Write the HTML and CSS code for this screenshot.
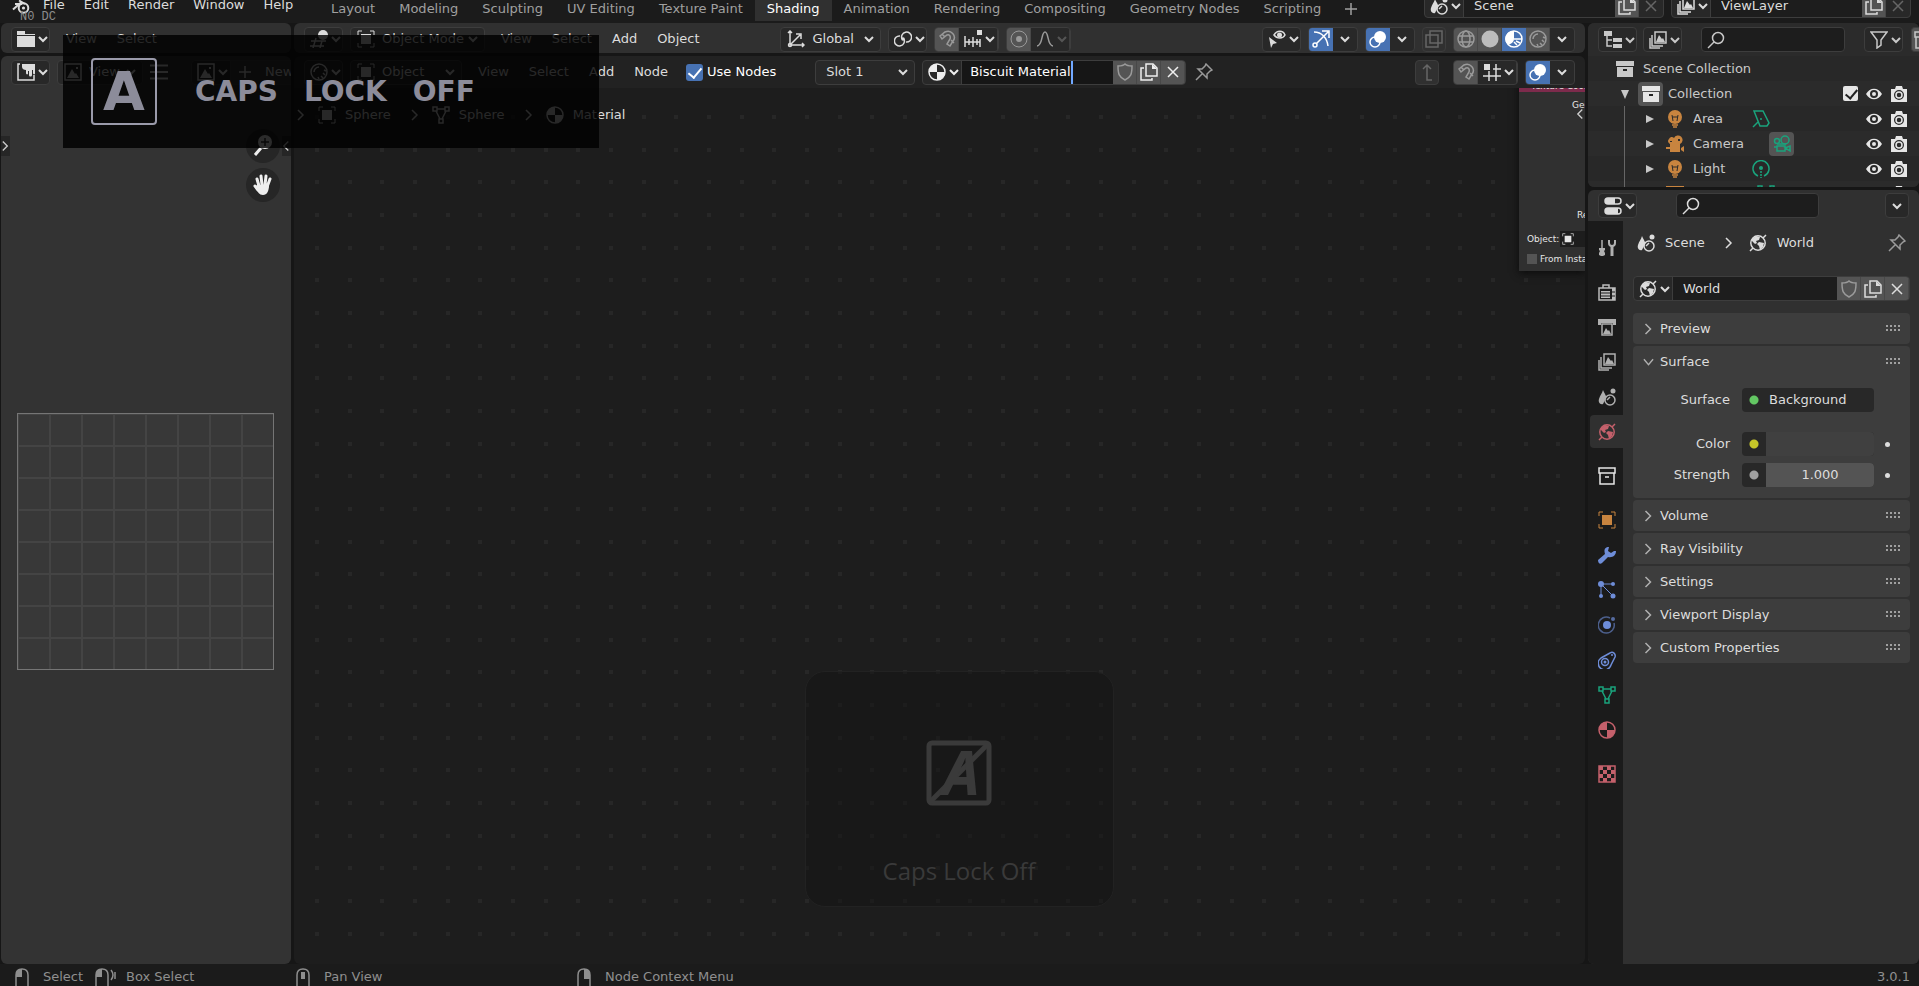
FILE: index.html
```html
<!DOCTYPE html>
<html lang="en">
<head>
<meta charset="utf-8">
<title>Blender</title>
<link rel="stylesheet" href="styles.css">
</head>
<body>
<svg class="sprite" aria-hidden="true">
  <symbol id="chev" viewBox="0 0 10 10"><path d="M1 3l4 4 4-4"/></symbol>
  <symbol id="right" viewBox="0 0 10 14"><path d="M2 2l5 5-5 5"/></symbol>
  <symbol id="left" viewBox="0 0 10 14"><path d="M7 2L2 7l5 5"/></symbol>
  <symbol id="down" viewBox="0 0 12 14"><path d="M1 4l5 6 5-6"/></symbol>
  <symbol id="blender" viewBox="0 0 18 18"><circle cx="11.500" cy="10" r="4.800" stroke-width="2"/><circle cx="11.500" cy="10" r="1.600" class="f"/><path d="M1 11.500L9 4.500M3 6h7M7 2.500l6 3.500" stroke-width="2"/></symbol>
  <symbol id="folder" viewBox="0 0 18 18"><path class="f" d="M0 1h8v3h10v1H0zM0 6h18v11H0z"/></symbol>
  <symbol id="paint" viewBox="0 0 18 18"><path d="M3 1H1v16h16v-5"/><path class="f" d="M5 1h13v10c-1 1-2 0-2-1V7h-1v5c0 2-3 2-3 0V8h-1v3c-1 1-2 0-2-1V7c-2 0-4-1-4-3z"/></symbol>
  <symbol id="image" viewBox="0 0 18 18"><path d="M1 1h16v16H1z"/><path class="f" d="M3 15L8 6l3 5 1-1 3 5zM12 4h2v2h-2z"/></symbol>
  <symbol id="lines" viewBox="0 0 18 18"><path d="M0 2.500h18M0 9h18M0 15.500h18" stroke-width="2"/></symbol>
  <symbol id="plus" viewBox="0 0 12 12"><path d="M6 0v12M0 6h12"/></symbol>
  <symbol id="view3d" viewBox="0 0 18 18"><circle class="f" cx="13" cy="5" r="5"/><path d="M1 11h15M0 16h14M6 8l-3 10M12 11l-2 7"/></symbol>
  <symbol id="object" viewBox="0 0 18 18"><path d="M1 5V1h4M13 1h4v4M17 13v4h-4M5 17H1v-4" stroke-width="1"/><path class="f" d="M4 4h10v10H4z"/></symbol>
  <symbol id="ball" viewBox="0 0 18 18"><circle cx="9" cy="9" r="8"/><path d="M4 9a5 5 0 0 1 5-5"/><path d="M14 7l2 1M13 10l2 2M11 13l2 2M8 14l1 2" stroke-width="1.500"/></symbol>
  <symbol id="mesh" viewBox="0 0 18 18"><path d="M1 1h4v4H1zM13 1h4v4h-4zM7 13h4v4H7zM5 3h8M4 5l4 8M14 5l-4 8"/></symbol>
  <symbol id="mat" viewBox="0 0 18 18"><circle cx="9" cy="9" r="8"/><path class="f" d="M9 9V1a8 8 0 0 0-8 8zM9 9v8a8 8 0 0 0 8-8z"/></symbol>
  <symbol id="matball" viewBox="0 0 18 18"><circle cx="9" cy="9" r="8"/><path class="f" d="M9 9V1a8 8 0 0 0-6 14c3-1 6-3 6-6z"/><path d="M9 9h8M11 11l4 2M9 12l3 3"/></symbol>
  <symbol id="world" viewBox="0 0 18 18"><circle cx="9" cy="9" r="7.200"/><path class="f" d="M3 5l4-3 4 1-1 3-3 1 1 2-2 1-3-3zM10 8l5 1-1 4-3 3-1-4-2-2z"/><path d="M1 17l3-3M14 4l3-3"/></symbol>
  <symbol id="axes" viewBox="0 0 18 18"><path d="M3 1v14h14M1 3l2-2 2 2M15 13l2 2-2 2M3 15L13 5M9 4h5v5"/><circle cx="3" cy="15" r="1.500"/></symbol>
  <symbol id="link" viewBox="0 0 18 18"><path d="M8 9a5 5 0 1 1 4 3M10 9a5 5 0 1 1-4-3"/><circle class="f" cx="9" cy="9" r="1.800"/></symbol>
  <symbol id="magnet" viewBox="0 0 18 18"><path d="M2 6l5-4c6-3 12 4 8 9l-3 5-3-2 3-5c1-3-1-5-3-4L4 9zM4 4l3 3M13 10l3 3"/></symbol>
  <symbol id="snap" viewBox="0 0 18 18"><path d="M1 6v11M1 12h15M5 9v6M9 7v10M13 9v6M16 9v8"/><path class="f" d="M13 0h5v5h-5z"/></symbol>
  <symbol id="grid" viewBox="0 0 18 18"><path d="M6 8v10M13 1v17M0 13h18M10 6h8"/><path class="f" d="M1 1h6v6H1z"/></symbol>
  <symbol id="prop" viewBox="0 0 18 18"><circle cx="9" cy="9" r="8" stroke-width="1"/><circle class="f" cx="9" cy="9" r="3"/></symbol>
  <symbol id="curve" viewBox="0 0 18 18"><path d="M1 16c6 0 4-14 8-14s2 14 8 14"/></symbol>
  <symbol id="vis" viewBox="0 0 18 18"><path d="M6 5c3-5 9-5 11 0-2 4-8 4-11 0z"/><circle class="f" cx="11.500" cy="5" r="2.500"/><path class="f" d="M1 7l8 6-4 1-2 4z"/></symbol>
  <symbol id="gizmo" viewBox="0 0 18 18"><path d="M2 2c8 0 13 6 14 14M4 14L16 2M10 1h7v7"/><circle cx="3" cy="15" r="2"/></symbol>
  <symbol id="overlay" viewBox="0 0 18 18"><circle class="f" cx="11" cy="7" r="6"/><circle cx="6" cy="12" r="5"/></symbol>
  <symbol id="xray" viewBox="0 0 18 18"><path d="M5 1h12v12H5zM1 5h12v12H1z"/></symbol>
  <symbol id="wire" viewBox="0 0 18 18"><circle cx="9" cy="9" r="8"/><ellipse cx="9" cy="9" rx="4" ry="8"/><path d="M2 6h14M2 12h14"/></symbol>
  <symbol id="solid" viewBox="0 0 18 18"><circle class="f" cx="9" cy="9" r="8.500"/></symbol>
  <symbol id="up" viewBox="0 0 18 18"><path d="M14 17H9V2M5 6l4-4 4 4"/></symbol>
  <symbol id="shield" viewBox="0 0 18 18"><path d="M9 1c2 2 5 2 7 2 0 8-1 11-7 14C3 14 2 11 2 3c2 0 5 0 7-2z"/></symbol>
  <symbol id="copy" viewBox="0 0 18 18"><path d="M6 1h7l4 4v8H6zM4 5H1v12h11v-2"/><path class="f" d="M12 1l5 5h-5z"/></symbol>
  <symbol id="x" viewBox="0 0 18 18"><path d="M4 4l10 10M14 4L4 14"/></symbol>
  <symbol id="pin" viewBox="0 0 18 18"><path d="M11 1l6 6-2 1-3 3v4L3 6h4l3-3zM7 11l-6 6"/></symbol>
  <symbol id="tree" viewBox="0 0 18 18"><path class="f" d="M0 0h8v5H0zM9 7h9v4H9zM9 13h9v4H9z"/><path d="M3 5v10h5M3 9h5"/></symbol>
  <symbol id="layers" viewBox="0 0 18 18"><path d="M6 1h11v11H6zM3 4v11h11M1 7v10h10"/><path class="f" d="M7 11l3-7 3 4 1-1 2 4z"/></symbol>
  <symbol id="search" viewBox="0 0 18 18"><circle cx="11" cy="7" r="5.500"/><path d="M7 11l-6 6"/></symbol>
  <symbol id="filter" viewBox="0 0 18 18"><path d="M1 1h16l-6 8v5l-4 3V9z"/></symbol>
  <symbol id="box" viewBox="0 0 18 18"><path class="f" d="M0 1h18v5H0zM1 7h16v10H1z"/><path d="M7 10h4" stroke="#222" stroke-width="2"/></symbol>
  <symbol id="boxo" viewBox="0 0 18 18"><path d="M1 1h16v5H1zM2 6v11h14V6M7 10h4"/></symbol>
  <symbol id="bulb" viewBox="0 0 18 18"><circle class="f" cx="9" cy="7" r="7"/><path class="f" d="M5 9h8v4H5z"/><path d="M6 15h6M7 17h4"/><path d="M6 5l1 6M12 5l-1 6M6 7h6" stroke="#2b2b2b" stroke-width="1"/></symbol>
  <symbol id="movie" viewBox="0 0 18 18"><path class="f" fill-rule="evenodd" d="M3 4a3 3 0 0 1 5-1 4.500 4.500 0 1 1 6 6v2H4V9a3 3 0 0 1-1-5zm1 2v1h2V6zm8-2v2h2V4zM0 12h4v-1h10v6H4v-3H0zM15 13l3-2v6l-3-2z"/></symbol>
  <symbol id="cam2" viewBox="0 0 18 18"><circle cx="4" cy="6" r="2.500"/><circle cx="12" cy="5" r="4"/><path d="M4 9h9M4 11h8v5H4zM12 13l5-2v5zM1 12h3"/></symbol>
  <symbol id="area" viewBox="0 0 18 18"><path d="M2 1h9l6 12-2 3H8zM1 17l5-5"/><circle class="f" cx="9" cy="9" r="1"/></symbol>
  <symbol id="point" viewBox="0 0 18 18"><path d="M6 16a8 8 0 1 1 6 0"/><circle class="f" cx="9" cy="8" r="2"/><path d="M9 11v7" stroke-dasharray="2 1"/></symbol>
  <symbol id="eye" viewBox="0 0 18 18"><path class="f" fill-rule="evenodd" d="M1 9c4-7 12-7 16 0-4 7-12 7-16 0zm4 0a4 4 0 1 0 8 0 4 4 0 1 0-8 0z"/><circle class="f" cx="9" cy="9" r="2"/></symbol>
  <symbol id="cam" viewBox="0 0 18 18"><path class="f" fill-rule="evenodd" d="M1 4h4l1-3h6l1 3h4v13H1zm3 6a5 5 0 1 0 10 0 5 5 0 1 0-10 0z"/><circle cx="9" cy="10" r="3"/></symbol>
  <symbol id="props" viewBox="0 0 18 18"><rect x="1" y="1" width="16" height="6" rx="3"/><rect x="1" y="11" width="16" height="6" rx="3"/><path class="f" d="M4 1h7v6H4a3 3 0 0 1 0-6zM4 11h10v6H4a3 3 0 0 1 0-6z"/></symbol>
  <symbol id="tool" viewBox="0 0 18 18"><path d="M4 1v8"/><path d="M14 7v10" stroke-width="3"/><path class="f" d="M1 9h6v2L6 12l1 2v2l-2 1H3l-2-1v-2l1-2-1-1z"/><path d="M11 1v3c0 4 6 4 6 0V1" stroke-width="2"/></symbol>
  <symbol id="render" viewBox="0 0 18 18"><path d="M5 5V2h6v3M1 5h16v12H1z"/><path class="f" d="M14 5h3v12h-3zM3 8h9v7H3z"/><path d="M14 9h3M14 13h3M3 10h9M3 13h9" stroke="#1b1b1b" stroke-width="1"/></symbol>
  <symbol id="output" viewBox="0 0 18 18"><path class="f" d="M0 1h18v6h-3V5H3v2H0z"/><path d="M4 6h10v11H4z"/><path class="f" d="M5 16l3-6 2 3 1-1 2 4z"/></symbol>
  <symbol id="scene" viewBox="0 0 18 18"><path class="f" d="M5 2c1 3 4 6 3 8l-3 6C2 17 0 14 1 11c1-4 3-5 4-9z"/><circle class="f" cx="15" cy="3" r="2.500"/><circle cx="12" cy="12" r="5"/><path d="M9 12l3-3"/></symbol>
  <symbol id="wrench" viewBox="0 0 18 18"><path class="f" d="M16 5l-3 2-3-2 1-4C6 1 6 5 7 8l-7 6c0 3 2 5 4 3l6-6c5 1 8-2 8-6z"/></symbol>
  <symbol id="parts" viewBox="0 0 18 18"><path d="M3 3h13M3 3v13M3 3l12 12" stroke-width="1"/><circle class="f" cx="3" cy="3" r="3"/><circle class="f" cx="15" cy="3" r="2"/><circle class="f" cx="3" cy="15" r="2"/><circle class="f" cx="15" cy="15" r="2.500"/></symbol>
  <symbol id="phys" viewBox="0 0 18 18"><path d="M12 2a8 8 0 1 0 4 5" opacity=".6"/><circle class="f" cx="9" cy="9" r="4"/><circle class="f" cx="15" cy="3" r="2" opacity=".7"/></symbol>
  <symbol id="constr" viewBox="0 0 18 18"><path d="M3 7l9-5c3-2 6 1 5 4l-4 8a6.500 6.500 0 1 1-10-7z"/><circle cx="7" cy="11" r="3.500"/><circle class="f" cx="7" cy="11" r="1.500"/><circle class="f" cx="14" cy="4" r="1"/></symbol>
  <symbol id="tex" viewBox="0 0 18 18"><path d="M1 1h16v16H1z"/><path class="f" d="M1 1h4v4H1zM9 1h4v4H9zM5 5h4v4H5zM13 5h4v4h-4zM1 9h4v4H1zM9 9h4v4H9zM5 13h4v4H5zM13 13h4v4h-4z"/></symbol>
  <symbol id="hand" viewBox="0 0 20 22"><path d="M6 12L4 5M9 11L8 2M12 11l1-9M14 13l3-8M5 16l-3-4" stroke-width="3" stroke-linecap="round"/><path class="f" d="M4 11h12c0 6-2 10-6 10s-5-3-8-8z"/></symbol>
  <symbol id="zoomin" viewBox="0 0 18 22"><circle class="f" cx="11" cy="7" r="7"/><path d="M7 13l-6 7" stroke-width="3"/><path d="M11 3v8M7 7h8" stroke="#333"/></symbol>
  <symbol id="grip" viewBox="0 0 15 7"><path d="M0 1h15M0 5h15" stroke-width="2" stroke-dasharray="2 2"/></symbol>
</svg>

<header class="topbar">
  <svg class="i logo"><use href="#blender"/></svg>
  <nav class="menus top-menus"><button>File</button><button>Edit</button><button>Render</button><button>Window</button><button>Help</button></nav>
  <span class="ghost">N0 DC</span>
  <nav class="tabs">
    <button>Layout</button><button>Modeling</button><button>Sculpting</button><button>UV Editing</button><button>Texture Paint</button><button class="on">Shading</button><button>Animation</button><button>Rendering</button><button>Compositing</button><button>Geometry Nodes</button><button>Scripting</button><button class="add" aria-label="Add workspace"><svg class="i12"><use href="#plus"/></svg></button>
  </nav>
  <div class="ids">
    <div class="group id"><button class="ed" aria-label="Browse scene"><svg class="i"><use href="#scene"/></svg><svg class="c"><use href="#chev"/></svg></button><input aria-label="Scene name" value="Scene"><button class="lit" aria-label="New scene"><svg class="i"><use href="#copy"/></svg></button><button class="cell dim" aria-label="Delete scene"><svg class="i"><use href="#x"/></svg></button></div>
    <div class="group id"><button class="ed" aria-label="Browse view layer"><svg class="i"><use href="#layers"/></svg><svg class="c"><use href="#chev"/></svg></button><input aria-label="View layer name" value="ViewLayer"><button class="lit" aria-label="New view layer"><svg class="i"><use href="#copy"/></svg></button><button class="cell dim" aria-label="Delete view layer"><svg class="i"><use href="#x"/></svg></button></div>
  </div>
</header>

<main class="work">
  <div class="col">
    <section class="area bar">
      <div class="head"><button class="group ed" aria-label="File browser"><svg class="i"><use href="#folder"/></svg><svg class="c"><use href="#chev"/></svg></button>
      <nav class="menus"><button>View</button><button>Select</button></nav></div>
    </section>
    <section class="area image">
      <div class="head"><button class="group ed" aria-label="Image editor"><svg class="i"><use href="#paint"/></svg><svg class="c"><use href="#chev"/></svg></button>
        <div class="group drop mode"><svg class="i"><use href="#image"/></svg><select aria-label="Editor mode"><option>View</option></select><svg class="c"><use href="#chev"/></svg></div>
        <button aria-label="Menu"><svg class="i"><use href="#lines"/></svg></button>
        <div class="group newimg"><button class="ed" aria-label="Browse image"><svg class="i"><use href="#image"/></svg><svg class="c"><use href="#chev"/></svg></button><button class="new"><svg class="i12"><use href="#plus"/></svg>New</button></div>
      </div>
      <div class="uv"><div class="uvgrid"></div></div>
      <button class="edge edge-l" aria-label="Show toolbar"><svg><use href="#right"/></svg></button>
      <button class="edge edge-r" aria-label="Show sidebar"><svg><use href="#left"/></svg></button>
      <div class="nav"><button aria-label="Zoom"><svg><use href="#zoomin"/></svg></button><button aria-label="Pan"><svg><use href="#hand"/></svg></button></div>
    </section>
  </div>

  <div class="col">
    <section class="area bar">
      <div class="head"><button class="group ed" aria-label="3D viewport"><svg class="i"><use href="#view3d"/></svg><svg class="c"><use href="#chev"/></svg></button>
        <div class="group drop objmode"><svg class="i"><use href="#object"/></svg><select aria-label="Mode"><option>Object Mode</option></select><svg class="c"><use href="#chev"/></svg></div>
        <nav class="menus"><button>View</button><button>Select</button><button>Add</button><button>Object</button></nav>
        <div class="tools transform">
          <div class="group drop orient"><svg class="i"><use href="#axes"/></svg><select aria-label="Orientation"><option>Global</option></select><svg class="c"><use href="#chev"/></svg></div>
          <button class="group ed" aria-label="Pivot"><svg class="i"><use href="#link"/></svg><svg class="c"><use href="#chev"/></svg></button>
          <div class="group"><button class="lit soft" aria-label="Snap"><svg class="i"><use href="#magnet"/></svg></button><button class="ed" aria-label="Snapping"><svg class="i"><use href="#snap"/></svg><svg class="c"><use href="#chev"/></svg></button></div>
          <div class="group"><button class="lit soft" aria-label="Proportional editing"><svg class="i"><use href="#prop"/></svg></button><button class="ed soft" aria-label="Falloff"><svg class="i"><use href="#curve"/></svg><svg class="c faint"><use href="#chev"/></svg></button></div>
        </div>
        <div class="tools end">
          <button class="group ed" aria-label="Visibility"><svg class="i"><use href="#vis"/></svg><svg class="c"><use href="#chev"/></svg></button>
          <div class="group"><button class="blue" aria-label="Gizmos"><svg class="i"><use href="#gizmo"/></svg></button><button class="cell" aria-label="Gizmo options"><svg class="c"><use href="#chev"/></svg></button></div>
          <div class="group"><button class="blue" aria-label="Overlays"><svg class="i"><use href="#overlay"/></svg></button><button class="cell" aria-label="Overlay options"><svg class="c"><use href="#chev"/></svg></button></div>
          <button class="group cell dim off" aria-label="X-ray"><svg class="i"><use href="#xray"/></svg></button>
          <div class="group"><button class="lit soft" aria-label="Wireframe"><svg class="i"><use href="#wire"/></svg></button><button class="lit pale" aria-label="Solid"><svg class="i"><use href="#solid"/></svg></button><button class="blue" aria-label="Material preview"><svg class="i"><use href="#matball"/></svg></button><button class="lit soft" aria-label="Rendered"><svg class="i"><use href="#ball"/></svg></button><button class="cell" aria-label="Shading options"><svg class="c"><use href="#chev"/></svg></button></div>
        </div>
      </div>
    </section>
    <section class="area nodes">
      <svg class="dots" aria-hidden="true"><defs><pattern id="dotgrid" x="21" y="59" width="98" height="98" patternUnits="userSpaceOnUse"><path class="dot" d="M0 0h4v4H0zM33 0h4v4h-4zM65 0h4v4h-4zM0 33h4v4H0zM33 33h4v4h-4zM65 33h4v4h-4zM0 65h4v4H0zM33 65h4v4h-4zM65 65h4v4h-4z"/></pattern></defs><rect width="100%" height="100%" fill="url(#dotgrid)" stroke="none"/></svg>
      <div class="node"><div class="node-title">Texture Coordinate</div><span class="sock">Generated</span><span class="sock refl">Reflection</span><div class="node-row"><span>Object:</span><span class="node-field"><svg class="i12"><use href="#object"/></svg></span></div><label class="node-row"><input type="checkbox">From Instancer</label></div>
      <div class="head nodehead"><button class="group ed" aria-label="Shader editor"><svg class="i"><use href="#ball"/></svg><svg class="c"><use href="#chev"/></svg></button>
        <div class="group drop objtype"><svg class="i"><use href="#object"/></svg><select aria-label="Shader type"><option>Object</option></select><svg class="c"><use href="#chev"/></svg></div>
        <nav class="menus"><button>View</button><button>Select</button><button>Add</button><button>Node</button></nav>
        <label class="use"><input type="checkbox" class="tick" checked>Use Nodes</label>
        <div class="tools slots">
          <div class="group drop slot"><select aria-label="Slot"><option>Slot 1</option></select><svg class="c"><use href="#chev"/></svg></div>
          <div class="group mat"><button class="ed" aria-label="Browse material"><svg class="i"><use href="#mat"/></svg><svg class="c"><use href="#chev"/></svg></button><span class="editing"><input aria-label="Material name" value="Biscuit Material"><i class="caret"></i></span><button class="lit soft" aria-label="Fake user"><svg class="i"><use href="#shield"/></svg></button><button class="lit" aria-label="New material"><svg class="i"><use href="#copy"/></svg></button><button class="lit" aria-label="Unlink material"><svg class="i"><use href="#x"/></svg></button></div>
          <button class="plain soft" aria-label="Pin"><svg class="i"><use href="#pin"/></svg></button>
        </div>
        <div class="tools end">
          <button class="group cell dim off up" aria-label="Parent node tree"><svg class="i"><use href="#up"/></svg></button>
          <div class="group"><button class="lit soft" aria-label="Snap"><svg class="i"><use href="#magnet"/></svg></button><button class="ed" aria-label="Snap type"><svg class="i"><use href="#grid"/></svg><svg class="c"><use href="#chev"/></svg></button></div>
          <div class="group"><button class="blue" aria-label="Overlays"><svg class="i"><use href="#overlay"/></svg></button><button class="cell" aria-label="Overlay options"><svg class="c"><use href="#chev"/></svg></button></div>
        </div>
      </div>
      <div class="crumbs"><svg class="sep"><use href="#right"/></svg><svg class="i"><use href="#object"/></svg><span>Sphere</span><svg class="sep"><use href="#right"/></svg><svg class="i"><use href="#mesh"/></svg><span>Sphere</span><svg class="sep"><use href="#right"/></svg><svg class="i"><use href="#mat"/></svg><span>Material</span></div>
      <button class="edge edge-n" aria-label="Show sidebar"><svg><use href="#left"/></svg></button>
    </section>
  </div>

  <div class="col">
    <section class="area outliner">
      <div class="head"><button class="group ed" aria-label="Outliner"><svg class="i"><use href="#tree"/></svg><svg class="c"><use href="#chev"/></svg></button><button class="group ed" aria-label="Display mode"><svg class="i"><use href="#layers"/></svg><svg class="c"><use href="#chev"/></svg></button>
        <label class="group find"><svg class="i"><use href="#search"/></svg><input type="search" aria-label="Filter outliner"></label>
        <button class="group ed" aria-label="Filter"><svg class="i"><use href="#filter"/></svg><svg class="c"><use href="#chev"/></svg></button><button class="group lit" aria-label="New collection"><svg class="i"><use href="#boxo"/></svg></button></div>
      <ul class="rows">
        <li class="l0"><svg class="i"><use href="#box"/></svg><span>Scene Collection</span></li>
        <li class="l1"><svg class="tri"><path d="M1 2h8L5 11z"/></svg><span class="chip"><svg class="i"><use href="#box"/></svg></span><span>Collection</span><span class="flags"><input type="checkbox" class="tick white" aria-label="Include collection" checked><svg class="i"><use href="#eye"/></svg><svg class="i"><use href="#cam"/></svg></span></li>
        <li class="l2"><svg class="tri"><path d="M1 2v8l8-4z"/></svg><svg class="i orange"><use href="#bulb"/></svg><span class="name">Area</span><svg class="i green"><use href="#area"/></svg><span class="flags"><svg class="i"><use href="#eye"/></svg><svg class="i"><use href="#cam"/></svg></span></li>
        <li class="l2"><svg class="tri"><path d="M1 2v8l8-4z"/></svg><svg class="i orange"><use href="#movie"/></svg><span class="name">Camera</span><span class="chip green"><svg class="i"><use href="#cam2"/></svg></span><span class="flags"><svg class="i"><use href="#eye"/></svg><svg class="i"><use href="#cam"/></svg></span></li>
        <li class="l2"><svg class="tri"><path d="M1 2v8l8-4z"/></svg><svg class="i orange"><use href="#bulb"/></svg><span class="name">Light</span><svg class="i green"><use href="#point"/></svg><span class="flags"><svg class="i"><use href="#eye"/></svg><svg class="i"><use href="#cam"/></svg></span></li>
        <li class="l2"><svg class="tri"></svg><svg class="i orange"><use href="#box"/></svg><span class="name wider"></span><svg class="i green"><use href="#mesh"/></svg><span class="flags"><svg class="i"><use href="#eye"/></svg><svg class="i"><use href="#cam"/></svg></span></li>
      </ul>
    </section>
    <section class="area props">
      <div class="head"><button class="group ed" aria-label="Properties editor"><svg class="i"><use href="#props"/></svg><svg class="c"><use href="#chev"/></svg></button>
        <label class="group find pfind"><svg class="i"><use href="#search"/></svg><input type="search" aria-label="Search properties"></label>
        <button class="group cell last" aria-label="Options"><svg class="c"><use href="#chev"/></svg></button></div>
      <div class="pbody">
        <nav class="ptabs">
          <button aria-label="Tool"><svg class="i"><use href="#tool"/></svg></button>
          <button class="gap pale" aria-label="Render"><svg class="i"><use href="#render"/></svg></button>
          <button aria-label="Output"><svg class="i"><use href="#output"/></svg></button>
          <button aria-label="View Layer"><svg class="i"><use href="#layers"/></svg></button>
          <button aria-label="Scene"><svg class="i"><use href="#scene"/></svg></button>
          <button class="on red" aria-label="World"><svg class="i"><use href="#world"/></svg></button>
          <button class="gap bright" aria-label="Collection"><svg class="i"><use href="#boxo"/></svg></button>
          <button class="gap orange" aria-label="Object"><svg class="i"><use href="#object"/></svg></button>
          <button class="azure" aria-label="Modifiers"><svg class="i"><use href="#wrench"/></svg></button>
          <button class="azure" aria-label="Particles"><svg class="i"><use href="#parts"/></svg></button>
          <button class="azure" aria-label="Physics"><svg class="i"><use href="#phys"/></svg></button>
          <button class="azure" aria-label="Constraints"><svg class="i"><use href="#constr"/></svg></button>
          <button class="green" aria-label="Data"><svg class="i"><use href="#mesh"/></svg></button>
          <button class="red" aria-label="Material"><svg class="i"><use href="#mat"/></svg></button>
          <button class="gap red" aria-label="Texture"><svg class="i"><use href="#tex"/></svg></button>
        </nav>
        <div class="pmain">
          <div class="path"><svg class="i"><use href="#scene"/></svg><span>Scene</span><svg class="sep"><use href="#right"/></svg><svg class="i"><use href="#world"/></svg><span>World</span><button class="plain soft" aria-label="Pin"><svg class="i"><use href="#pin"/></svg></button></div>
          <div class="group wid"><button class="ed" aria-label="Browse world"><svg class="i"><use href="#world"/></svg><svg class="c"><use href="#chev"/></svg></button><input aria-label="World name" value="World"><button class="lit soft" aria-label="Fake user"><svg class="i"><use href="#shield"/></svg></button><button class="lit" aria-label="New world"><svg class="i"><use href="#copy"/></svg></button><button class="lit" aria-label="Unlink world"><svg class="i"><use href="#x"/></svg></button></div>
          <div class="panels">
            <section class="panel"><button class="ptitle"><svg class="pc"><use href="#right"/></svg>Preview<svg class="grip"><use href="#grip"/></svg></button></section>
            <section class="panel"><button class="ptitle"><svg class="pc"><use href="#down"/></svg>Surface<svg class="grip"><use href="#grip"/></svg></button>
              <div class="fields">
                <div class="row first"><label for="surf">Surface</label><div class="field dark"><i class="dotc lime"></i><select id="surf"><option>Background</option></select></div></div>
                <div class="row"><label for="color">Color</label><div class="field"><i class="dotc yellow"></i><button id="color" class="swatch" aria-label="Color"></button></div><i class="key"></i></div>
                <div class="row"><label for="strength">Strength</label><div class="field"><i class="dotc grey"></i><input id="strength" class="num" value="1.000"></div><i class="key"></i></div>
              </div>
            </section>
            <section class="panel"><button class="ptitle"><svg class="pc"><use href="#right"/></svg>Volume<svg class="grip"><use href="#grip"/></svg></button></section>
            <section class="panel"><button class="ptitle"><svg class="pc"><use href="#right"/></svg>Ray Visibility<svg class="grip"><use href="#grip"/></svg></button></section>
            <section class="panel"><button class="ptitle"><svg class="pc"><use href="#right"/></svg>Settings<svg class="grip"><use href="#grip"/></svg></button></section>
            <section class="panel"><button class="ptitle"><svg class="pc"><use href="#right"/></svg>Viewport Display<svg class="grip"><use href="#grip"/></svg></button></section>
            <section class="panel"><button class="ptitle"><svg class="pc"><use href="#right"/></svg>Custom Properties<svg class="grip"><use href="#grip"/></svg></button></section>
          </div>
        </div>
      </div>
    </section>
  </div>
</main>

<footer class="status">
  <div class="hint w1"><svg class="m"><path d="M1 20V7q0-6 6-6t6 6v13"/><path class="f" d="M1 9V6q0-5 6-5v8z"/></svg>Select</div>
  <div class="hint w2"><svg class="m wide"><path d="M1 20V7q0-6 6-6t6 6v13"/><path class="f" d="M1 9V6q0-5 6-5v8z"/><path d="M16 2q4 5 0 10M20 4v7"/></svg>Box Select</div>
  <div class="hint w3"><svg class="m"><path d="M1 20V7q0-6 6-6t6 6v13"/><path class="f" d="M5 4h4v7H5z"/></svg>Pan View</div>
  <div class="hint"><svg class="m"><path d="M1 20V7q0-6 6-6t6 6v13"/><path class="f" d="M7 1q6 0 6 5v5H7z"/></svg>Node Context Menu</div>
  <span class="version">3.0.1</span>
</footer>

<aside class="caps"><span class="capskey">A</span><p><span>CAPS</span> <span>LOCK</span> <span>OFF</span></p></aside>
<aside class="osd"><svg class="osdkey" viewBox="0 0 66 66"><rect x="3" y="3" width="60" height="60" rx="3"/><path d="M4 62L62 4"/><text x="35" y="55">A</text></svg><p>Caps Lock Off</p></aside>
</body>
</html>
```
FILE: styles.css
```css
* { box-sizing: border-box; }
body {
  margin: 0; height: 100vh; display: flex; flex-direction: column; overflow: hidden;
  position: relative; background: #161616; color: #dcdcdc;
  font: 13px/16px "DejaVu Sans", sans-serif;
}
button, input, select { font: inherit; color: inherit; border: 0; padding: 0; margin: 0; background: none; outline: 0; min-width: 0; appearance: none; }
button { display: flex; align-items: center; flex: none; white-space: nowrap; }
svg { fill: none; stroke: currentColor; stroke-width: 1.5; flex: none; display: block; }
.f { fill: currentColor; stroke: none; }
.sprite { position: absolute; width: 0; height: 0; }
.i { width: 18px; height: 18px; }
.i12 { width: 12px; height: 12px; }
.c { width: 10px; height: 10px; stroke-width: 2; }
p { margin: 0; }

.topbar { height: 23px; flex: none; display: flex; align-items: flex-start; background: #1b1b1b; position: relative; }
.logo { margin-left: 12px; margin-top: -2px; }
.menus { display: flex; gap: 20px; }
.top-menus { width: 290px; margin-left: 13px; margin-top: -3px; gap: 19px; }
.ghost { position: absolute; left: 20px; top: 11px; font: 12px/12px "Liberation Mono", monospace; color: #8c8c8c; }
.tabs { display: flex; margin-left: -14px; color: #a0a0a0; }
.tabs button { padding: 0 12px; height: 21px; padding-bottom: 4px; }
.tabs .on { background: #303030; color: #fff; }
.ids { display: flex; gap: 7px; margin-left: auto; margin-right: 8px; margin-top: -7px; }
.id { width: 240px; }

.work { flex: 1; min-height: 0; display: grid; grid-template-columns: 290fr 1291fr 331fr; gap: 3px; padding-left: 1px; }
.col { display: flex; flex-direction: column; gap: 3px; min-width: 0; min-height: 0; }
.area { border-radius: 6px; overflow: hidden; position: relative; background: #303030; }
.bar { height: 30px; flex: none; }
.head { display: flex; align-items: center; gap: 7px; padding: 0 10px; height: 32px; flex: none; }
.group { display: flex; align-items: stretch; height: 25px; border: 1px solid #3d3d3d; border-radius: 4px; background: #282828; overflow: hidden; flex: none; }
.ed { width: 39px; gap: 3px; padding: 0 5px; align-items: center; }
.group > .ed { border-right: 1px solid #3d3d3d; }
.lit, .cell, .blue { width: 24px; justify-content: center; align-items: center; }
.lit { background: #545454; border-right: 1px solid #484848; }
.blue { background: #4772b3; color: #fff; }
.soft { color: #9a9a9a; }
.pale { color: #bcbcbc; }
.dim { color: #666; }
.faint { opacity: .4; }
.off { background: #303030; }
.group > input { flex: 1; background: #1d1d1d; padding-left: 10px; }
.drop { align-items: center; padding: 0 6px; gap: 7px; }
.drop select { flex: 1; margin-right: -5px; }
.tools { display: flex; gap: 7px; align-items: center; }
.end { margin-left: auto; }
.up { margin-right: 7px; }
.head .menus { margin-left: 9px; }
.objmode { width: 135px; }
.transform { margin-left: 74px; }
.orient { width: 101px; }

.image { flex: 1; background: #333; display: flex; flex-direction: column; }
.mode { width: 86px; }
.newimg { margin-left: 16px; width: 120px; }
.new { background: #383838; padding-left: 8px; gap: 14px; flex: 1; }
.uv { flex: 1; display: flex; align-items: center; justify-content: center; padding: 30px 2px 0 0; }
.uvgrid { width: 257px; height: 257px; border: 1px solid #757575;
  background: linear-gradient(90deg, #444 2px, transparent 2px) -1px 0/32px 32px, linear-gradient(#444 2px, #383838 2px) 0 -1px/32px 32px; }
.edge { position: absolute; width: 9px; height: 20px; background: #262626; color: #ccc; top: 80px; justify-content: center; }
.edge svg { width: 9px; height: 14px; }
.edge-l { left: 0; }
.edge-r { right: 0; }
.edge-n { right: 0; top: 48px; background: none; }
.nav { position: absolute; right: 11px; top: 73px; display: grid; gap: 5px; }
.nav button { width: 34px; height: 34px; border-radius: 50%; background: #262626; color: #eee; justify-content: center; }
.nav svg { width: 20px; height: 22px; }

.nodes { flex: 1; background: #1d1d1d; }
.dots { position: absolute; width: 100%; height: 100%; }
.dot { fill: #272727; stroke: none; }
.nodehead { position: relative; background: #222; }
.objtype { width: 112px; }
.use { display: flex; align-items: center; gap: 4px; margin-left: 11px; color: #fff; }
.tick { width: 17px; height: 17px; border-radius: 3px; background: #4772b3; position: relative; }
.tick::after { content: ""; position: absolute; left: 5px; top: 1px; width: 6px; height: 11px; border: solid #fff; border-width: 0 2px 2px 0; transform: rotate(40deg); }
.white { width: 15px; height: 15px; border-radius: 2px; background: #e6e6e6; }
.white::after { left: 5px; border-color: #222; width: 5px; height: 10px; }
.slots { margin-left: 32px; }
.slot { width: 100px; padding-left: 10px; }
.mat { width: 264px; color: #eee; }
.editing { flex: 1; display: flex; align-items: center; background: #161616; position: relative; color: #fff; }
.editing input { width: 100%; padding-left: 8px; }
.caret { position: absolute; left: 109px; top: 0; bottom: 0; width: 2px; background: #71a8ff; }
.plain { margin-left: 2px; }
.crumbs { position: relative; display: flex; align-items: center; gap: 9px; height: 54px; }
.crumbs .sep, .path .sep { width: 10px; height: 14px; }
.crumbs .sep:first-child { margin: 0 3px 0 2px; }
.crumbs span + .sep { margin: 0 3px 0 10px; }
.node { position: absolute; top: 22px; right: 0; width: 66px; height: 193px; background: #303030; box-shadow: 0 2px 8px #0b0b0b; font-size: 9px; line-height: 12px; overflow: hidden; white-space: nowrap; padding-left: 8px; color: #e6e6e6; }
.node-title { background: #7d2b4c; height: 14px; line-height: 8px; padding: 4px 0 0 12px; margin-left: -8px; }
.sock { display: block; padding: 7px 0 0 45px; }
.refl { padding: 98px 0 0 50px; }
.node-row { display: flex; align-items: center; gap: 1px; height: 20px; margin-top: 8px; }
.node-row + .node-row { margin-top: 0; gap: 3px; }
.node-field { background: #1d1d1d; padding: 2px 20px 2px 2px; }
.node-row input { width: 10px; height: 10px; background: #545454; flex: none; }

.outliner { height: 164px; flex: none; background: #282828; color: #c8c8c8; }
.outliner .head { background: #2b2b2b; gap: 6px; height: 33px; }
.find { flex: 1; align-items: center; background: #1d1d1d; padding-left: 5px; margin: 0 13px; }
.find input { width: 100%; }
.group.find > input { padding: 0; }
.outliner .lit { margin-left: 2px; margin-right: -34px; }
.outliner .find { max-width: 144px; }
.rows { list-style: none; margin: 0; padding: 0; }
.rows li { display: flex; align-items: center; height: 25px; padding-right: 11px; }
.rows li:nth-child(even) { background: #2b2b2b; }
.l0 { padding-left: 28px; gap: 9px; }
.l1 { padding-left: 32px; gap: 6px; }
.rows .l1 span + span:not(.flags) { margin-left: -1px; }
.l2 { padding-left: 57px; gap: 9px; background: linear-gradient(#666, #666) 36px 0/1px 100% no-repeat; }
.rows .l2:nth-child(even) { background: linear-gradient(#666, #666) 36px 0/1px 100% no-repeat, #2b2b2b; }
.l2 .name { min-width: 50px; }
.l2 .wider { min-width: 55px; }
.l2 .chip { margin-left: 16px; }
.tri { width: 12px; height: 12px; fill: #c8c8c8; stroke: none; }
.chip { width: 25px; height: 24px; border-radius: 4px; background: #545454; display: flex; align-items: center; justify-content: center; }
.l1 .chip { color: #e6e6e6; }
.flags { margin-left: auto; display: flex; align-items: center; gap: 7px; color: #e6e6e6; }
.orange { color: #c8843f; }
.green { color: #1aa37c; }
.red { color: #c4606b; }
.azure { color: #6e8dd8; }
.bright { color: #e6e6e6; }

.props { flex: 1; display: flex; flex-direction: column; min-height: 0; }
.props .head { height: 31px; }
.pfind { flex: none; width: 143px; margin: 0 0 0 32px; }
.last { margin-left: auto; }
.pbody { flex: 1; display: flex; min-height: 0; }
.ptabs { width: 35px; flex: none; background: #1b1b1b; padding: 10px 0 0 2px; display: flex; flex-direction: column; gap: 2px; }
.ptabs button { height: 33px; justify-content: center; border-radius: 4px 0 0 4px; }
.ptabs button:not([class]) { color: #b0b0b0; }
.ptabs .gap { margin-top: 9px; }
.ptabs .on { background: #303030; }
.pmain { flex: 1; min-width: 0; padding: 11px 9px 0 10px; }
.path { display: flex; align-items: center; gap: 10px; height: 22px; padding: 0 4px; }
.path .sep { margin: 0 5px 0 9px; }
.path .plain { margin-left: auto; }
.wid { margin: 22px 0 12px; }
.panels { display: grid; gap: 2px; }
.panel { background: #3d3d3d; border-radius: 4px; }
.ptitle { width: 100%; height: 31px; padding: 0 9px 0 10px; gap: 6px; }
.pc { width: 11px; height: 14px; color: #b0b0b0; }
.grip { width: 15px; height: 7px; margin-left: auto; color: #a0a0a0; }
.fields { padding: 11px 36px 11px 0; display: grid; gap: 7px; }
.row { display: grid; grid-template-columns: 97px 1fr; gap: 12px; height: 24px; align-items: center; text-align: right; position: relative; }
.first { margin-bottom: 13px; }
.field { display: flex; height: 24px; border-radius: 4px; overflow: hidden; background: #282828; }
.field select { flex: 1; padding-left: 3px; }
.dotc { width: 24px; flex: none; background: radial-gradient(circle, currentColor 4px, transparent 5px); }
.lime { color: #63c763; }
.yellow { color: #c7c729; }
.grey { color: #a1a1a1; }
.swatch { flex: 1; background: #404040; }
.num { flex: 1; background: #545454; text-align: center; }
.key { position: absolute; right: -16px; width: 5px; height: 5px; border-radius: 50%; background: #ddd; }

.status { height: 22px; flex: none; display: flex; padding: 0 9px 0 15px; background: #1b1b1b; color: #8f8f8f; }
.hint { display: flex; align-items: center; gap: 13px; padding-top: 4px; white-space: nowrap; }
.m { width: 15px; height: 18px; }
.wide { width: 22px; margin-right: -4px; }
.w1 { width: 80px; }
.w2 { width: 201px; }
.w3 { width: 281px; }
.version { margin-left: auto; padding-top: 5px; }

.caps { position: absolute; left: 63px; top: 35px; width: 536px; height: 113px; background: rgba(0,0,0,.82); display: flex; align-items: center; gap: 38px; padding: 0 28px; color: #8c8c9a; font-weight: bold; }
.capskey { width: 66px; height: 67px; border: 2px solid #9a9aaa; border-radius: 4px; font-size: 54px; line-height: 63px; text-align: center; }
.caps p { display: flex; gap: 26px; font-size: 28px; line-height: 32px; }
.osd { position: absolute; left: 50%; bottom: 79px; margin-left: -155px; width: 309px; height: 236px; border-radius: 20px; border: 1px solid #222; background: rgba(20,20,20,.5); display: flex; flex-direction: column; align-items: center; justify-content: flex-end; gap: 48px; padding-bottom: 18px; color: #3a3a3a; font: 24px/34px "Open Sans", sans-serif; }
.osdkey { width: 66px; height: 66px; stroke-width: 5; }
.osdkey text { fill: currentColor; stroke: none; font: italic bold 60px "Open Sans", sans-serif; text-anchor: middle; }
```
